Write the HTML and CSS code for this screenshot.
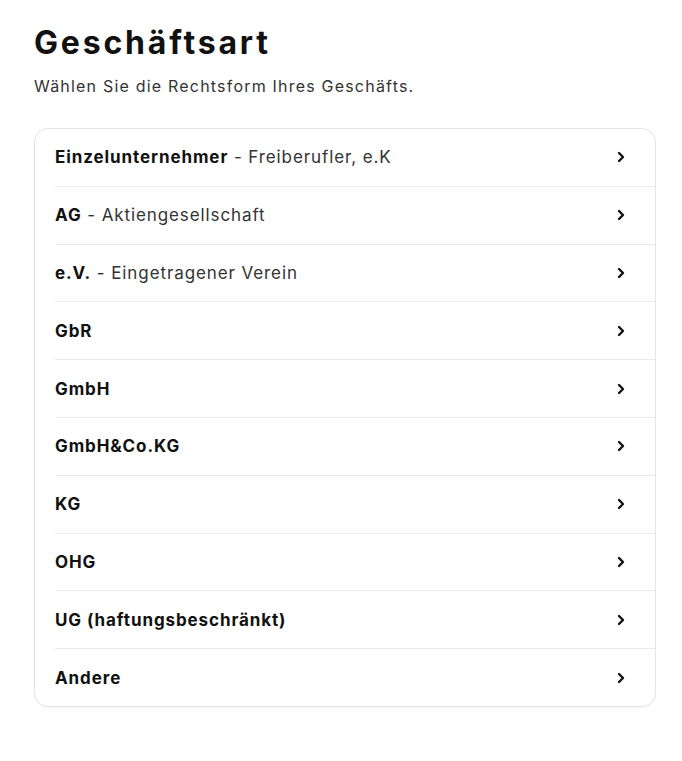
FILE: index.html
```html
<!DOCTYPE html>
<html lang="de">
<head>
    <meta charset="UTF-8">
    <meta name="viewport" content="width=device-width, initial-scale=1.0">
    <title>Geschäftsart</title>
    <link rel="stylesheet" href="styles.css">
</head>
<body>

    <div class="page">
        <h1>Geschäftsart</h1>
        <p class="subtitle">Wählen Sie die Rechtsform Ihres Geschäfts.</p>

        <ul class="type-list">
            <li><a href="#"><span><b>Einzelunternehmer</b> - Freiberufler, e.K</span><svg class="chevron" viewBox="0 0 16 16"><path d="M6 4l4 4-4 4"/></svg></a></li>
            <li><a href="#"><span><b>AG</b> - Aktiengesellschaft</span><svg class="chevron" viewBox="0 0 16 16"><path d="M6 4l4 4-4 4"/></svg></a></li>
            <li><a href="#"><span><b>e.V.</b> - Eingetragener Verein</span><svg class="chevron" viewBox="0 0 16 16"><path d="M6 4l4 4-4 4"/></svg></a></li>
            <li><a href="#"><span><b>GbR</b></span><svg class="chevron" viewBox="0 0 16 16"><path d="M6 4l4 4-4 4"/></svg></a></li>
            <li><a href="#"><span><b>GmbH</b></span><svg class="chevron" viewBox="0 0 16 16"><path d="M6 4l4 4-4 4"/></svg></a></li>
            <li><a href="#"><span><b>GmbH&amp;Co.KG</b></span><svg class="chevron" viewBox="0 0 16 16"><path d="M6 4l4 4-4 4"/></svg></a></li>
            <li><a href="#"><span><b>KG</b></span><svg class="chevron" viewBox="0 0 16 16"><path d="M6 4l4 4-4 4"/></svg></a></li>
            <li><a href="#"><span><b>OHG</b></span><svg class="chevron" viewBox="0 0 16 16"><path d="M6 4l4 4-4 4"/></svg></a></li>
            <li><a href="#"><span><b>UG (haftungsbeschränkt)</b></span><svg class="chevron" viewBox="0 0 16 16"><path d="M6 4l4 4-4 4"/></svg></a></li>
            <li><a href="#"><span><b>Andere</b></span><svg class="chevron" viewBox="0 0 16 16"><path d="M6 4l4 4-4 4"/></svg></a></li>
        </ul>
    </div>

</body>
</html>
```

FILE: styles.css
```css
/* Auswahl der Rechtsform */
body {
    font-family: Inter, "Noto Sans", sans-serif;
    background-color: #fff;
    color: #222;
    margin: 0;
}
.page {
    padding: 24px 26px 40px 34px;
}
h1 {
    margin: 0;
    font-size: 32px;
    line-height: 38px;
    font-weight: 700;
    letter-spacing: 2.8px;
    color: #111;
}
.subtitle {
    margin: 13px 0 0;
    font-size: 16px;
    line-height: 22px;
    letter-spacing: 1.2px;
    color: #333;
}
/* Liste */
.type-list {
    list-style: none;
    margin: 31px 0 0;
    padding: 0;
    border: 1px solid #e3e4e8;
    border-radius: 14px;
    box-shadow: 0 1px 2px rgba(0,0,0,0.05);
}
.type-list li {
    margin-left: 20px;
    border-bottom: 1px solid #e8e9ed;
}
.type-list li:last-child {
    border-bottom: none;
}
.type-list a {
    display: flex;
    align-items: center;
    justify-content: space-between;
    height: 56.8px;
    padding-right: 26px;
    font-size: 17px;
    letter-spacing: 0.9px;
    color: #333;
    text-decoration: none;
}
.type-list b {
    font-weight: 700;
    color: #111;
}
.chevron {
    width: 16px;
    height: 16px;
    fill: none;
    stroke: #111;
    stroke-width: 2.4;
    stroke-linecap: round;
    stroke-linejoin: round;
}
```
